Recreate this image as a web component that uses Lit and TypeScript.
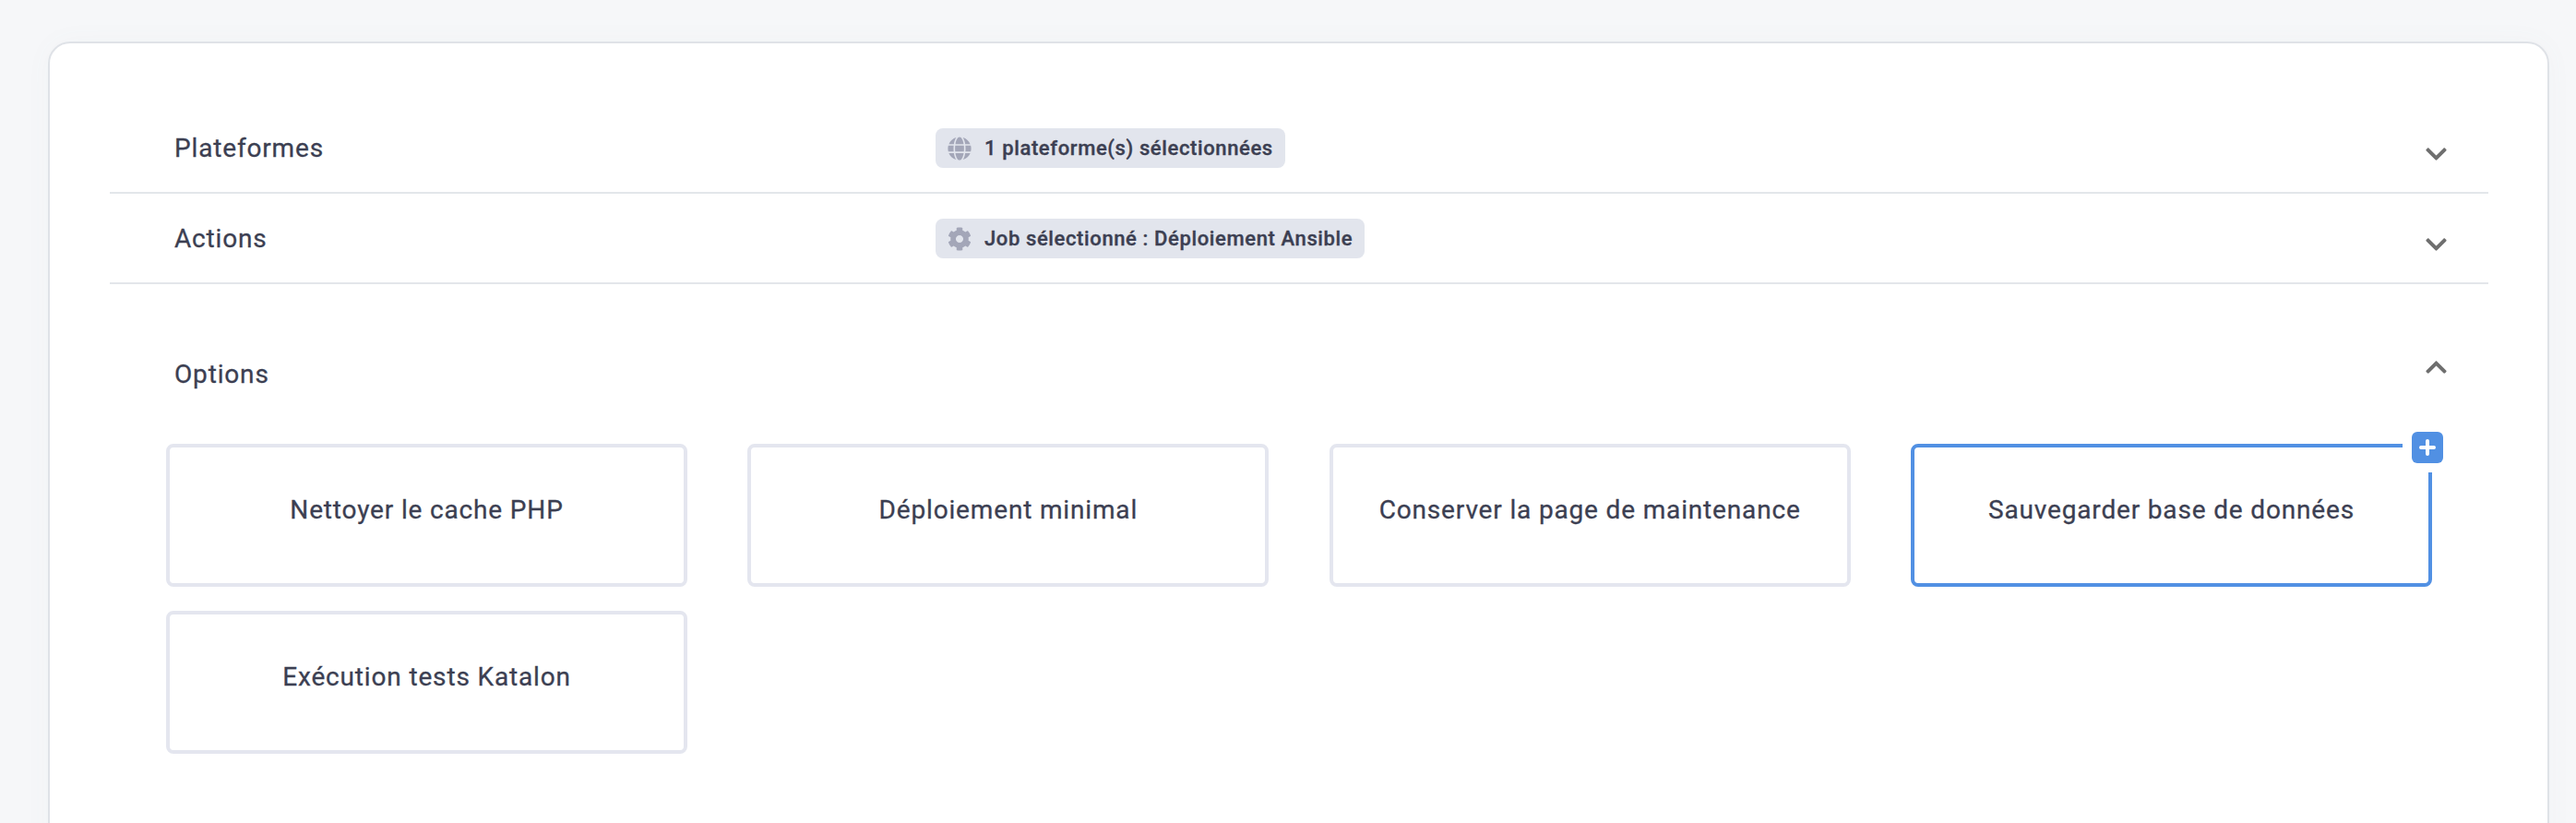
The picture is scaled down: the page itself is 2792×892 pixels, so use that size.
import { LitElement, html, css, svg } from "lit";
import { customElement } from "lit/decorators.js";

const globe = svg`<path d="M336.5 160C322 70.7 287.8 8 248 8s-74 62.7-88.5 152h177zM152 256c0 22.2 1.2 43.5 3.3 64h185.3c2.1-20.5 3.3-41.8 3.3-64s-1.2-43.5-3.3-64H155.3c-2.1 20.5-3.3 41.8-3.3 64zm324.7-96c-28.6-67.9-86.5-120.4-158-141.6 24.4 33.8 41.2 84.7 50 141.6h108zM177.2 18.4C105.8 39.6 47.8 92.1 19.3 160h108c8.7-56.9 25.5-107.8 49.9-141.6zM487.4 192H372.7c2.1 21 3.3 42.5 3.3 64s-1.2 43-3.3 64h114.6c5.5-20.5 8.6-41.8 8.6-64s-3.1-43.5-8.5-64zM120 256c0-21.5 1.2-43 3.3-64H8.6C3.2 212.5 0 233.8 0 256s3.2 43.5 8.6 64h114.6c-2-21-3.2-42.5-3.2-64zm39.5 96c14.5 89.3 48.7 152 88.5 152s74-62.7 88.5-152h-177zm159.3 141.6c71.4-21.2 129.4-73.7 158-141.6h-108c-8.8 56.9-25.6 107.8-50 141.6zM19.3 352c28.6 67.9 86.5 120.4 158 141.6-24.4-33.8-41.2-84.7-50-141.6h-108z"/>`;
const gear = svg`<path d="M487.4 315.7l-42.6-24.6c4.3-23.2 4.3-47 0-70.2l42.6-24.6c4.9-2.8 7.1-8.6 5.5-14-11.1-35.6-30-67.8-54.7-94.6-3.8-4.1-10-5.1-14.8-2.3L380.8 110c-17.9-15.4-38.5-27.3-60.8-35.1V25.8c0-5.6-3.9-10.5-9.4-11.7-36.7-8.2-74.3-7.8-109.2 0-5.5 1.2-9.4 6.1-9.4 11.7V75c-22.2 7.9-42.8 19.8-60.8 35.1L88.7 85.5c-4.9-2.8-11-1.9-14.8 2.3-24.7 26.7-43.6 58.9-54.7 94.6-1.7 5.4.6 11.2 5.5 14L67.3 221c-4.3 23.2-4.3 47 0 70.2l-42.6 24.6c-4.9 2.8-7.1 8.6-5.5 14 11.1 35.6 30 67.8 54.7 94.6 3.8 4.1 10 5.1 14.8 2.3l42.6-24.6c17.9 15.4 38.5 27.3 60.8 35.1v49.2c0 5.6 3.9 10.5 9.4 11.7 36.7 8.2 74.3 7.8 109.2 0 5.5-1.2 9.4-6.1 9.4-11.7v-49.2c22.2-7.9 42.8-19.8 60.8-35.1l42.6 24.6c4.9 2.8 11 1.9 14.8-2.3 24.7-26.7 43.6-58.9 54.7-94.6 1.5-5.5-.7-11.3-5.6-14.1zM256 336c-44.1 0-80-35.9-80-80s35.9-80 80-80 80 35.9 80 80-35.9 80-80 80z"/>`;
const chevronPath = svg`<path d="M207.029 381.476L12.686 187.132c-9.373-9.373-9.373-24.569 0-33.941l22.667-22.667c9.357-9.357 24.522-9.375 33.901-.04L224 284.505l154.745-154.021c9.379-9.335 24.544-9.317 33.901.04l22.667 22.667c9.373 9.373 9.373 24.569 0 33.941L240.971 381.476c-9.373 9.372-24.569 9.372-33.942 0z"/>`;

const options = [
  "Nettoyer le cache PHP",
  "Déploiement minimal",
  "Conserver la page de maintenance",
  "Sauvegarder base de données",
  "Exécution tests Katalon",
];

@customElement("app-root")
export class AppRoot extends LitElement {
  static styles = css`
    :host {
      display: block;
      height: 892px;
      overflow: hidden;
      background: #f6f7f9;
      font-family: Roboto, "Liberation Sans", sans-serif;
      color: #3c3f52;
    }
    .panel {
      box-sizing: border-box;
      margin: 45px 29px 0 52px;
      height: 900px;
      padding: 65px 64px 0 65px;
      background: #fff;
      border: 2px solid #dfe2e7;
      border-radius: 24px;
      box-shadow: 0 0 30px rgba(120, 130, 150, 0.035);
    }
    .row {
      display: flex;
      align-items: center;
      box-sizing: border-box;
      height: 98px;
      padding: 1px 45px 0 70px;
      border-bottom: 2px solid #e3e6ea;
    }
    .title {
      width: 825px;
      flex: none;
      padding-top: 1px;
      font-size: 28px;
      line-height: 40px;
      font-weight: 400;
      letter-spacing: 0.84px;
      -webkit-text-stroke: 0.3px #3c3f52;
    }
    .chip {
      display: flex;
      align-items: center;
      gap: 14px;
      height: 43px;
      padding: 0 13px;
      border-radius: 8px;
      background: #e2e5ed;
      font-size: 22px;
      font-weight: 500;
      letter-spacing: 0.62px;
      -webkit-text-stroke: 0.35px #3c3f52;
    }
    .chip svg {
      width: 26px;
      height: 26px;
      fill: #a3a6b8;
    }
    .chev {
      width: 23px;
      height: 26px;
      margin-left: auto;
      fill: #6f6f6f;
      flex: none;
    }
    .row .chev {
      margin-top: 12px;
    }
    .head {
      display: flex;
      align-items: center;
      height: 40px;
      margin-top: 76px;
      padding: 0 45px 0 70px;
    }
    .head .title {
      padding-top: 4px;
    }
    .head .chev {
      margin-top: -12px;
      transform: scaleY(-1);
    }
    .grid {
      display: grid;
      width: 2456px;
      grid-template-columns: repeat(4, 1fr);
      column-gap: 65.33px;
      row-gap: 26px;
      margin-top: 57px;
      margin-left: 61px;
    }
    .opt {
      position: relative;
      box-sizing: border-box;
      height: 155px;
      padding-top: 48px;
      border: 4px solid #e4e6ef;
      border-radius: 8px;
      text-align: center;
      font-size: 28px;
      font-weight: 400;
      line-height: 40px;
      letter-spacing: 0.84px;
      -webkit-text-stroke: 0.3px #3c3f52;
    }
    .opt.on {
      border-color: #5190e3;
    }
    .badge {
      position: absolute;
      top: -17px;
      right: -16px;
      width: 34px;
      height: 34px;
      display: flex;
      align-items: center;
      justify-content: center;
      border-radius: 6px;
      background: #5190e3;
      box-shadow: 0 0 0 10px #fff;
    }
    .badge svg {
      width: 18px;
      height: 18px;
      stroke: #fff;
      stroke-width: 4;
      stroke-linecap: round;
      fill: none;
    }
  `;

  private chevron() {
    return html`<svg class="chev" viewBox="0 0 448 512">${chevronPath}</svg>`;
  }

  render() {
    return html`
      <div class="panel">
        <div class="row">
          <div class="title">Plateformes</div>
          <div class="chip">
            <svg viewBox="0 0 496 512">${globe}</svg>1 plateforme(s) sélectionnées
          </div>
          ${this.chevron()}
        </div>
        <div class="row">
          <div class="title">Actions</div>
          <div class="chip">
            <svg viewBox="0 0 512 512">${gear}</svg>Job sélectionné : Déploiement Ansible
          </div>
          ${this.chevron()}
        </div>
        <div class="head">
          <div class="title">Options</div>
          ${this.chevron()}
        </div>
        <div class="grid">
          ${options.map(
            (o, i) => html`<div class="opt ${i === 3 ? "on" : ""}">
              ${o}
              ${i === 3
                ? html`<div class="badge">
                    <svg viewBox="0 0 18 18"><path d="M9 2v14M2 9h14" /></svg>
                  </div>`
                : ""}
            </div>`
          )}
        </div>
      </div>
    `;
  }
}
